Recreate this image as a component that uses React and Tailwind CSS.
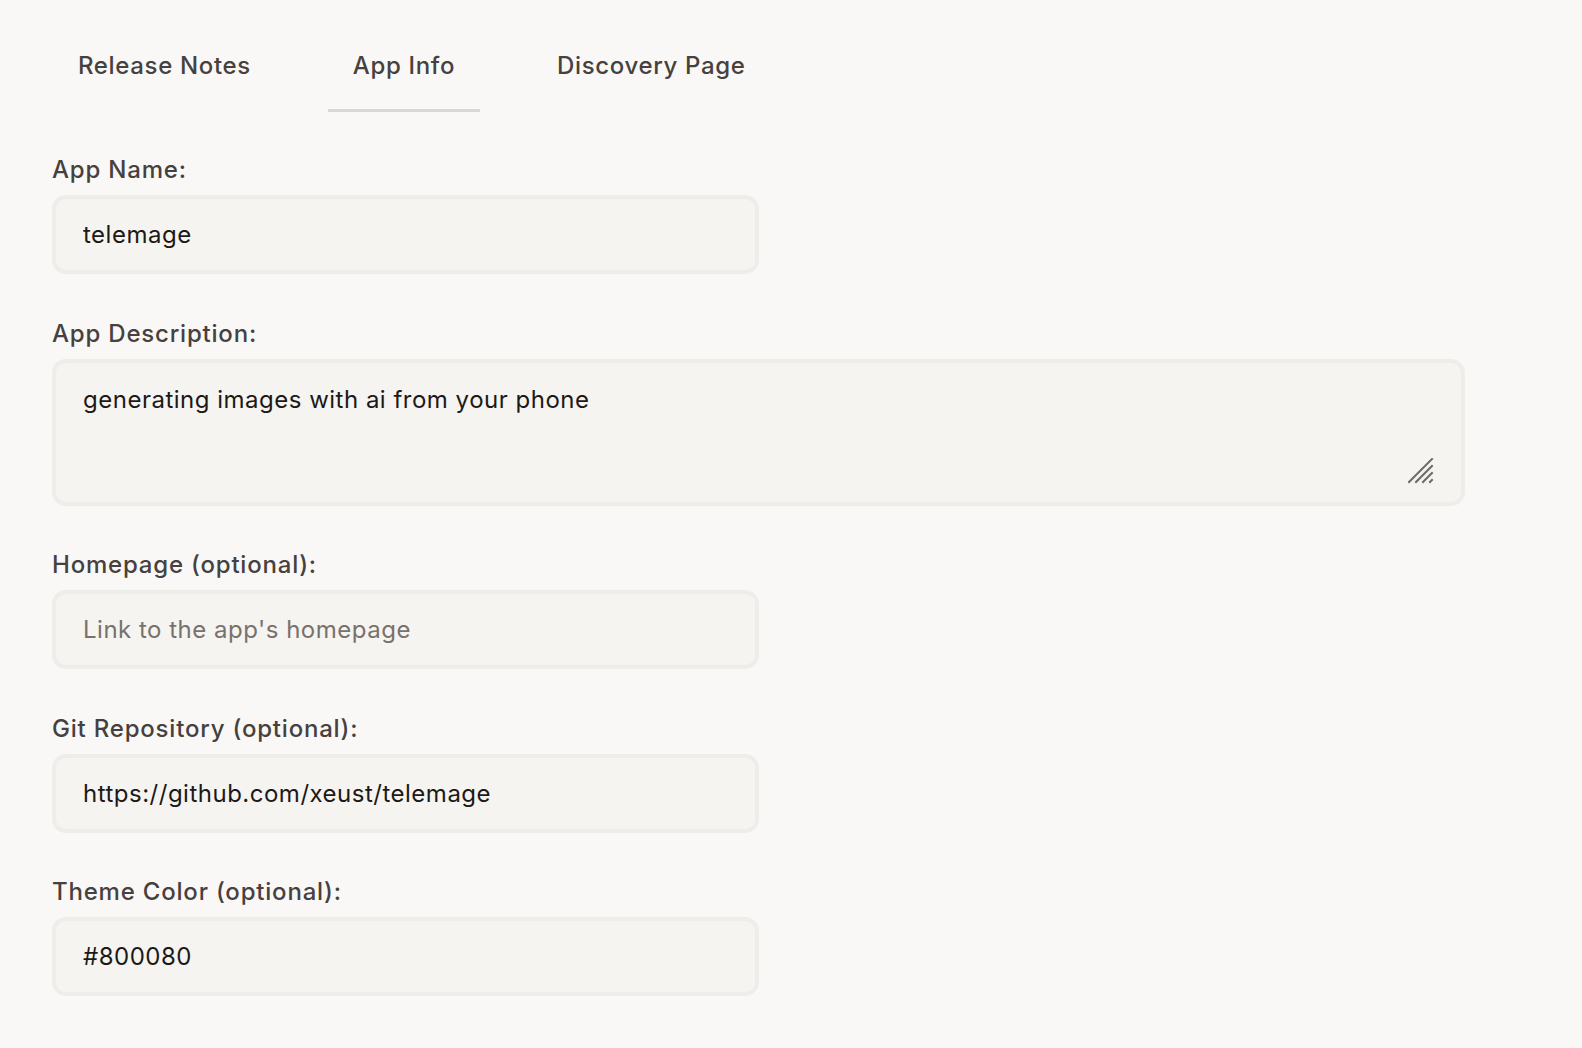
import React from "react";

const font = { fontFamily: "Inter, 'Noto Sans', sans-serif" };

function Label({ children }) {
  return (
    <div className="text-[24px] leading-[32px] font-medium text-[#46413e] tracking-[0.8px]">{children}</div>
  );
}

function Input({ value, placeholder }) {
  return (
    <input
      readOnly
      value={value || ""}
      placeholder={placeholder}
      className="mt-[9px] w-[707px] h-[79px] rounded-[14px] border-[4px] border-[#eeedea] bg-[#f5f4f1] px-[27px] text-[24px] leading-[32px] tracking-[0.5px] text-[#1c1917] placeholder:text-[#78716c] outline-none"
      style={font}
    />
  );
}

export default function App() {
  return (
    <div className="min-h-[1048px] w-full bg-[#f9f8f6]" style={font}>
      <div className="pl-[52px]">
        <div className="flex gap-[51px] pt-[50px]">
          <div className="px-[26px] pb-[27px] border-b-[3px] border-transparent text-[24px] leading-[32px] font-medium tracking-[0.65px] text-[#46413e]">Release Notes</div>
          <div className="px-[25px] pb-[27px] border-b-[3px] border-[#ddd7d1] text-[24px] leading-[32px] font-medium tracking-[0.65px] text-[#46413e]">App Info</div>
          <div className="px-[26px] pb-[27px] border-b-[3px] border-transparent text-[24px] leading-[32px] font-medium tracking-[0.65px] text-[#46413e]">Discovery Page</div>
        </div>

        <div className="mt-[42px] flex flex-col">
          <Label>App Name:</Label>
          <Input value="telemage" />

          <div className="mt-[44px]">
            <Label>App Description:</Label>
          </div>
          <div className="relative mt-[9px] w-[1413px]">
            <textarea
              readOnly
              value="generating images with ai from your phone"
              className="block w-full h-[147px] resize-none rounded-[14px] border-[4px] border-[#eeedea] bg-[#f5f4f1] px-[27px] pt-[21px] text-[24px] leading-[32px] tracking-[0.5px] text-[#1c1917] outline-none"
              style={font}
            />
            <svg className="absolute right-[31px] bottom-[22px]" width="26" height="26" viewBox="0 0 26 26">
              <g stroke="#6b6b6b" strokeWidth="2" strokeLinecap="square">
                <line x1="1" y1="24" x2="24" y2="1" />
                <line x1="8" y1="24" x2="24" y2="8" />
                <line x1="15" y1="24" x2="24" y2="15" />
                <line x1="22" y1="24" x2="24" y2="22" />
              </g>
            </svg>
          </div>

          <div className="mt-[43px]">
            <Label>Homepage (optional):</Label>
          </div>
          <Input placeholder="Link to the app's homepage" />

          <div className="mt-[44px]">
            <Label>Git Repository (optional):</Label>
          </div>
          <Input value="https://github.com/xeust/telemage" />

          <div className="mt-[43px]">
            <Label>Theme Color (optional):</Label>
          </div>
          <Input value="#800080" />
        </div>
      </div>
    </div>
  );
}
